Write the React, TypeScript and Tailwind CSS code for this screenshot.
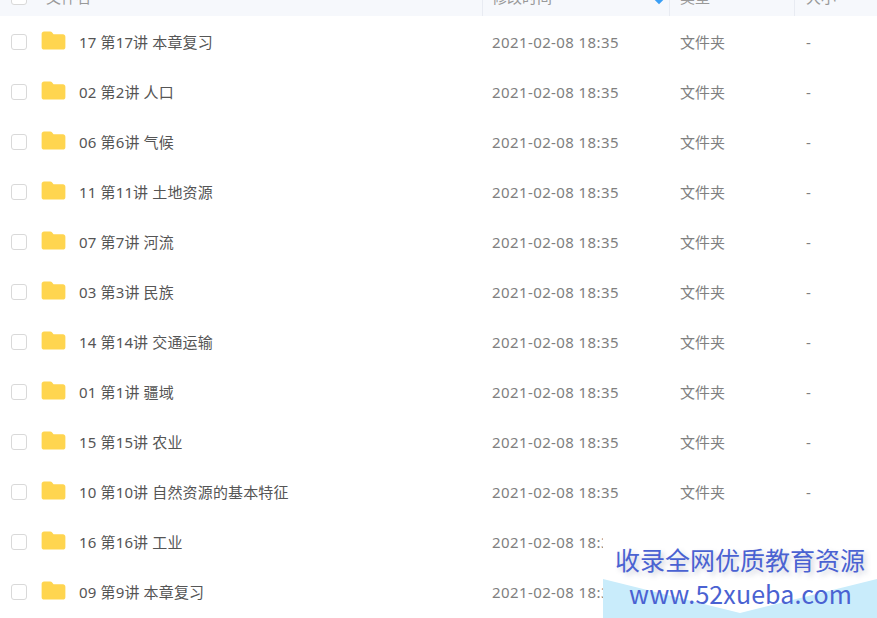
const rows = [
  "17 第17讲 本章复习",
  "02 第2讲 人口",
  "06 第6讲 气候",
  "11 第11讲 土地资源",
  "07 第7讲 河流",
  "03 第3讲 民族",
  "14 第14讲 交通运输",
  "01 第1讲 疆域",
  "15 第15讲 农业",
  "10 第10讲 自然资源的基本特征",
  "16 第16讲 工业",
  "09 第9讲 本章复习",
];

const FolderIcon = () => (
  <svg width="25" height="19" viewBox="0 0 26 20" className="shrink-0">
    <path
      d="M0.500 3C0.500 1.600 1.600 0.500 3 0.500h6.500c.9 0 1.600.4 2.100 1.100L13 3.500h10c1.300 0 2.500 1 2.500 2.500v11c0 1.400-1.100 2.500-2.500 2.500H3c-1.400 0-2.500-1.100-2.500-2.500z"
      fill="#ffd54f"
    />
  </svg>
);

const Row = ({ name, covered }: { name: string; covered: boolean }) => (
  <div className="flex h-[50px] items-center text-[15px] text-[#808080]">
    <div className="ml-[11px] h-4 w-4 shrink-0 rounded-[3px] border border-[#d9d9d9] bg-white" />
    <div className="ml-[14px] mb-1">
      <FolderIcon />
    </div>
    <div className="ml-[13px] w-[413px] tracking-[0.15px] text-[#555555]">{name}</div>
    {/* the last two rows sit under the watermark, time is cut at its edge */}
    <div
      className={
        covered
          ? "w-[111px] overflow-hidden whitespace-nowrap tracking-[0.4px]"
          : "w-[188px] tracking-[0.4px]"
      }
    >
      2021-02-08 18:35
    </div>
    {!covered && <div className="w-[126px]">文件夹</div>}
    {!covered && <div>-</div>}
  </div>
);

export default function App() {
  return (
    <div className="relative h-[618px] w-[877px] overflow-hidden bg-white font-['Noto_Sans','Noto_Sans_CJK_SC',sans-serif]">
      <div className="flex h-[16px] overflow-hidden bg-[#f6f8fc] text-[15px] text-[#999999]">
        <div className="ml-[11px] -mt-[11px] h-4 w-4 shrink-0 rounded-[3px] border border-[#d9d9d9] bg-white" />
        <div className="ml-[19px] -mt-[13px] w-[436px] leading-5">文件名</div>
        <div className="flex w-[187px] border-l border-[#e8ebf2] pl-[9px]">
          <span className="-mt-[13px] leading-5">修改时间</span>
          <span className="ml-[104px] -mt-[3px] h-[6px] w-[6px] shrink-0 rotate-45 bg-[#3b9ff5]" />
        </div>
        <div className="w-[125px] border-l border-[#e8ebf2] pl-[10px]">
          <div className="-mt-[13px] leading-5">类型</div>
        </div>
        <div className="flex-1 border-l border-[#e8ebf2] pl-[11px]">
          <div className="-mt-[13px] leading-5">大小</div>
        </div>
      </div>
      <div className="pt-px">
        {rows.map((name, i) => (
          <Row key={name} name={name} covered={i >= 10} />
        ))}
      </div>
      <div className="absolute bottom-0 right-0 h-[95px] w-[274px] bg-white">
        <svg width="274" height="39" viewBox="0 0 274 39" className="absolute bottom-0 left-0">
          <path d="M0 0L137 34L274 0V39H0z" fill="#c9ecfb" />
        </svg>
        <div className="absolute left-[12px] top-[20px] whitespace-nowrap font-['Noto_Sans_CJK_SC',sans-serif] text-[25px] leading-[32px] text-[#4a62d2] [text-shadow:3px_3px_5px_rgba(90,100,140,0.3)]">
          收录全网优质教育资源
        </div>
        <div className="absolute left-[26px] top-[52px] whitespace-nowrap font-['Noto_Sans_CJK_SC',sans-serif] text-[25px] leading-[36px] tracking-[0.1px] text-[#4a62d2]">
          www.52xueba.com
        </div>
      </div>
    </div>
  );
}
